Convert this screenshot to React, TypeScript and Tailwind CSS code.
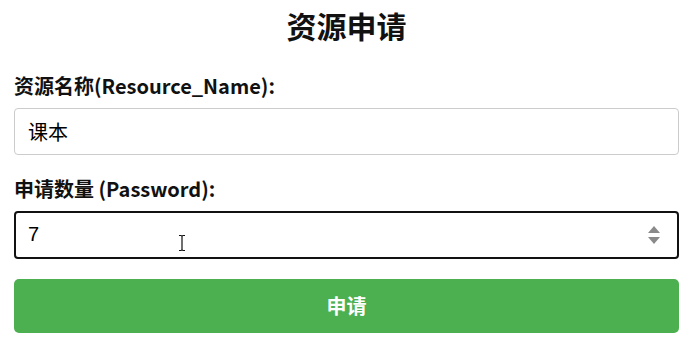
export default function App() {
  return (
    <div className="min-h-screen bg-white px-[14px] pt-[4px] font-['Noto_Sans_CJK_SC','Noto_Sans',sans-serif] text-[#111]">
      <h2 className="text-center text-[30px] font-bold leading-[42px]">资源申请</h2>

      <form className="mt-[26px] flex flex-col">
        <label className="text-[20px] font-bold leading-[28px]">资源名称(Resource_Name):</label>
        <input
          type="text"
          defaultValue="课本"
          className="mt-[8px] h-[47px] w-full rounded-[4px] border border-[#ccc] px-[13px] font-['Liberation_Sans','Noto_Sans_CJK_SC',sans-serif] text-[20px] text-black outline-none"
        />

        <label className="mt-[20px] text-[20px] font-bold leading-[28px]">申请数量 (Password):</label>
        <div className="relative mt-[8px]">
          <input
            type="text"
            defaultValue="7"
            className="h-[48px] w-full rounded-[4px] border-2 border-[#111] px-[12px] pb-[1px] font-['Liberation_Sans','Noto_Sans_CJK_SC',sans-serif] text-[20px] text-black outline-none"
          />
          <svg className="pointer-events-none absolute right-[18px] top-[12px]" width="14" height="24" viewBox="0 0 14 24">
            <path d="M7 3 L13 10 L1 10 Z" fill="#8a8a8a" />
            <path d="M1 14 L13 14 L7 21 Z" fill="#8a8a8a" />
          </svg>
          <svg className="pointer-events-none absolute left-[164px] top-[23px]" width="8" height="18" viewBox="0 0 8 18">
            <path d="M1 1.5 H3 Q4 1.5 4 3 V15 Q4 16.5 3 16.5 H1 M7 1.5 H5 Q4 1.5 4 3 M4 15 Q4 16.5 5 16.5 H7" stroke="#111" strokeWidth="1.2" fill="none" />
          </svg>
        </div>

        <button
          type="button"
          className="mt-[20px] h-[54px] w-full rounded-[5px] bg-[#4caf50] text-[20px] font-bold text-white"
        >
          申请
        </button>
      </form>
    </div>
  );
}
